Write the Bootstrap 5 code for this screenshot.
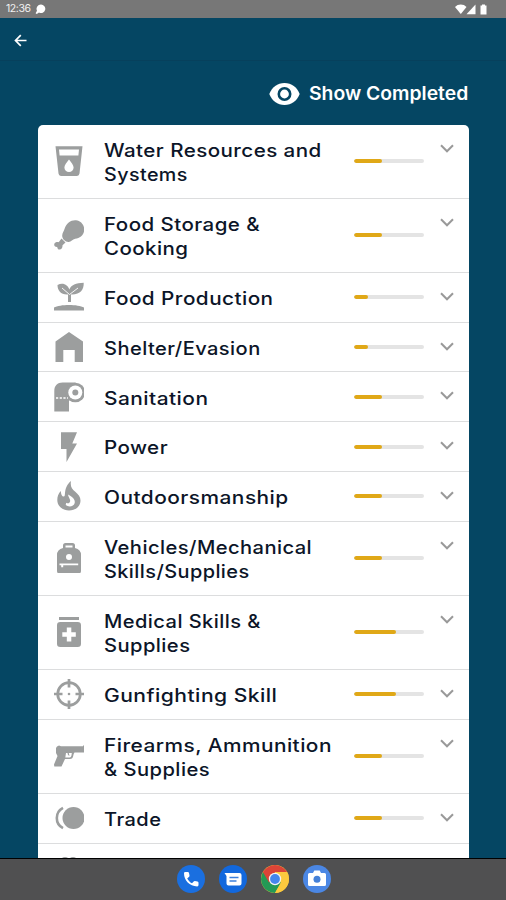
<!DOCTYPE html>
<html lang="en">
<head>
<meta charset="utf-8">
<meta name="viewport" content="width=device-width, initial-scale=1">
<title>Preparedness checklist</title>
<link href="https://cdn.jsdelivr.net/npm/bootstrap@5.3.0/dist/css/bootstrap.min.css" rel="stylesheet">
<style>
body { background: #054663; font-family: Inter, "Open Sans", sans-serif; height: 900px; overflow: hidden; }
.statusbar { height: 18px; background: #777; color: #f1f1f1; font-size: 10.5px; line-height: 18px; padding: 0 18px 0 6px; letter-spacing: -.4px; }
.topbar { height: 43px; padding: 2px 0 0 14px; border-bottom: 1px solid #07405c; }
.toggle-row { height: 63.5px; padding: 3px 38px 0 0; }
.toggle-label { font-size: 18.5px; font-weight: 600; width: 159px; margin-left: 9px; white-space: nowrap; }
.scroll-area { height: 733.5px; padding: 0 37px 0 38px; }
.checklist { background: #fff; border-radius: 5px 5px 0 0; height: 760px; }
.item { height: 49.7px; border-bottom: 1.5px solid #dcddde; padding-left: 15.5px; padding-right: 15px; }
.item.tall { height: 74.3px; }
.item svg.glyph { width: 30px; height: 30px; fill: #9c9e9e; flex: none; }
.title { width: 270.5px; padding: 2px 0 0 20.5px; flex: none; font-size: 18.3px; line-height: 24.4px; font-weight: 450; color: #0c1528; white-space: nowrap; }
.title span, .toggle-label span { display: block; width: max-content; transform-origin: 0 50%; }
.title span { letter-spacing: .4px; }
.item .progress { width: 70px; height: 4px; background: #e4e4e4; border-radius: 2px; flex: none; }
.item .progress-bar { background: #e0a817; border-radius: 2px; }
.chev { width: 14px; height: 9px; margin: 19px 0 0 15.5px; fill: none; stroke: #999; stroke-width: 2; align-self: flex-start; }
.dock { height: 42px; background: #505051; border-top: 1px solid #000; gap: 14px; padding: 0 0 1px 1px; }
.dock svg { width: 28px; height: 28px; }
</style>
</head>
<body class="d-flex flex-column m-0">
<header class="statusbar d-flex align-items-center flex-shrink-0">
  <span>12:36</span>
  <svg class="ms-1" width="11" height="11" viewBox="0 0 11 11"><path d="M6 .5a4.300 4.300 0 1 1-2 8.100L1.800 10 .6 9.200 2 6.700A4.300 4.300 0 0 1 6 .5z" fill="#fff"/></svg>
  <svg class="ms-auto" width="33" height="11" viewBox="0 0 33 11" fill="#fff"><path d="M0 3C3-.3 8.500-.3 11.500 3L5.800 10z"/><path d="M20.500.5v9.800H11.500z"/><path d="M25.500 1.500H27V.5h3v1h1.500v9h-6z"/></svg>
</header>
<nav class="topbar d-flex align-items-center flex-shrink-0">
  <svg width="13" height="13" viewBox="0 0 13 13" fill="none" stroke="#fff" stroke-width="1.700"><path d="M12.500 6.500H2M6.800 1.200L1.500 6.500l5.300 5.300"/></svg>
</nav>
<div class="toggle-row d-flex align-items-center justify-content-end text-white flex-shrink-0">
  <svg width="31" height="22" viewBox="0 0 31 22"><path d="M15.500 0C8.500 0 2.800 4.400.3 11c2.500 6.600 8.200 11 15.200 11s12.700-4.400 15.200-11C28.200 4.400 22.500 0 15.500 0z" fill="#fff"/><circle cx="15.500" cy="11" r="5.700" fill="none" stroke="#054663" stroke-width="2.600"/></svg>
  <div class="toggle-label"><span data-w="159">Show Completed</span></div>
</div>

<main class="scroll-area overflow-hidden flex-shrink-0">
<div class="checklist">
  <div class="item tall d-flex align-items-center">
    <svg class="glyph" viewBox="0 0 30 30"><path fill-rule="evenodd" d="M1.500.3h27l-3 27.200q-.3 2.400-2.500 2.400H7q-2.200 0-2.500-2.400zM5 3.500l.6 6h18.800l.6-6zM15 13.500c-2.400 3-4.600 5.600-4.600 8a4.600 4.600 0 0 0 9.200 0c0-2.400-2.200-5-4.600-8z"/></svg>
    <div class="title"><span data-w="218">Water Resources and</span><span data-w="84">Systems</span></div>
    <div class="progress"><div class="progress-bar" style="width:40%"></div></div>
    <svg class="chev" viewBox="0 0 14 9"><path d="M1 1.300l6 6 6-6"/></svg>
  </div>
  <div class="item tall d-flex align-items-center">
    <svg class="glyph" viewBox="0 0 30 30"><path d="M10.500 9C12.500 3 17-.3 22 .2c5 .6 8.500 4.800 8.200 10-.4 4.800-4 7.800-9 8.600-2.700.6-4 3-6.500 3.200C11.500 22.300 8 19 8.200 15.500c.1-2.500 1.500-4 2.300-6.500z"/><path d="M7.500 18.500l4 4-3 2.700c.2 2-1 4.300-3 4.300-1.700 0-2-1.300-2.300-2.600C1.500 27-.2 26 .3 24c.6-1.700 2.600-2.200 4.400-1.800z"/></svg>
    <div class="title"><span data-w="156">Food Storage &amp;</span><span data-w="84">Cooking</span></div>
    <div class="progress"><div class="progress-bar" style="width:40%"></div></div>
    <svg class="chev" viewBox="0 0 14 9"><path d="M1 1.300l6 6 6-6"/></svg>
  </div>
  <div class="item d-flex align-items-center">
    <svg class="glyph" viewBox="0 0 30 30"><path d="M0 28.500v-3c6-3.500 24-3.500 30 0v3zM14 20v-7.500C7 13 3.500 8.500 3.500 3 9 0 14 3 15.300 7.500 17 3 22 1 29.700.8 30 8 26 13 17 12.500V20z"/><path d="M8 6l7.500 6.500L24 6" fill="none" stroke="#fff" stroke-width=".9"/></svg>
    <div class="title"><span data-w="170">Food Production</span></div>
    <div class="progress"><div class="progress-bar" style="width:20%"></div></div>
    <svg class="chev" viewBox="0 0 14 9"><path d="M1 1.300l6 6 6-6"/></svg>
  </div>
  <div class="item d-flex align-items-center">
    <svg class="glyph" viewBox="0 0 30 30"><path d="M15 0l14 9.500V30h-8.300V18H9.300v12H1.500V9.500z"/></svg>
    <div class="title"><span data-w="157">Shelter/Evasion</span></div>
    <div class="progress"><div class="progress-bar" style="width:20%"></div></div>
    <svg class="chev" viewBox="0 0 14 9"><path d="M1 1.300l6 6 6-6"/></svg>
  </div>
  <div class="item d-flex align-items-center">
    <svg class="glyph" viewBox="0 0 30 30"><path d="M.3 29.500V9C.3 3.500 3.500.5 8.500.5h13v18H15v11z"/><circle cx="21.300" cy="10.500" r="9.800"/><circle cx="21.300" cy="10.500" r="7" fill="#fff"/><circle cx="21.300" cy="10.500" r="3"/><path d="M2 16h12" stroke="#fff" stroke-width="1.600" stroke-dasharray="2.200 1.500"/></svg>
    <div class="title"><span data-w="104">Sanitation</span></div>
    <div class="progress"><div class="progress-bar" style="width:40%"></div></div>
    <svg class="chev" viewBox="0 0 14 9"><path d="M1 1.300l6 6 6-6"/></svg>
  </div>
  <div class="item d-flex align-items-center">
    <svg class="glyph" viewBox="0 0 30 30"><path d="M7 .3h16l-4.700 11.200H23L12.500 30V17H7z"/></svg>
    <div class="title"><span data-w="64">Power</span></div>
    <div class="progress"><div class="progress-bar" style="width:40%"></div></div>
    <svg class="chev" viewBox="0 0 14 9"><path d="M1 1.300l6 6 6-6"/></svg>
  </div>
  <div class="item d-flex align-items-center">
    <svg class="glyph" viewBox="0 0 30 30"><path d="M17 0c-1 6 1 8 4 10.500 3.500 3 5.500 5.500 5.500 9 0 6-5 10-11.500 10S3.300 25 3.300 19c0-3.500 1-6.500 3.500-9 .2 3.500 1 5.500 3 5.500C12.500 15.500 8.500 7 17 0z"/><path d="M14 13.500c5 2.500 7.500 5.500 6.700 8.500-.8 3.500-6 4.500-9 2l.5-2.200c2 1.300 4 .2 4-2 0-2-1.700-3.300-2.200-6.300z" fill="#fff"/></svg>
    <div class="title"><span data-w="185">Outdoorsmanship</span></div>
    <div class="progress"><div class="progress-bar" style="width:40%"></div></div>
    <svg class="chev" viewBox="0 0 14 9"><path d="M1 1.300l6 6 6-6"/></svg>
  </div>
  <div class="item tall d-flex align-items-center">
    <svg class="glyph" viewBox="0 0 30 30"><path fill-rule="evenodd" d="M9 5V2.500Q9 0 11.500 0h7Q21 0 21 2.500V5q6 1.500 6 7v16q0 2.500-2.500 2.500h-19Q3 30.500 3 28V12q0-5.500 6-7zm2.500-.5h7v-2h-7zM15 11a3 3 0 1 0 0 6 3 3 0 0 0 0-6zM5.500 20.500v1.800h1.700v2h2v-2h15v-1.800z"/></svg>
    <div class="title"><span data-w="208">Vehicles/Mechanical</span><span data-w="146">Skills/Supplies</span></div>
    <div class="progress"><div class="progress-bar" style="width:40%"></div></div>
    <svg class="chev" viewBox="0 0 14 9"><path d="M1 1.300l6 6 6-6"/></svg>
  </div>
  <div class="item tall d-flex align-items-center">
    <svg class="glyph" viewBox="0 0 30 30"><path d="M5 0h20v3H5z"/><path fill-rule="evenodd" d="M6.300 5h17.400Q27 5 27 8.300v18.400q0 3.300-3.300 3.300H6.300Q3 30 3 26.700V8.300Q3 5 6.300 5zm6.500 5.500v4.700H8.300v4.500h4.500v4.800h4.500v-4.800h4.500v-4.500h-4.500v-4.700z"/></svg>
    <div class="title"><span data-w="157">Medical Skills &amp;</span><span data-w="86">Supplies</span></div>
    <div class="progress"><div class="progress-bar" style="width:60%"></div></div>
    <svg class="chev" viewBox="0 0 14 9"><path d="M1 1.300l6 6 6-6"/></svg>
  </div>
  <div class="item d-flex align-items-center">
    <svg class="glyph" viewBox="0 0 30 30"><g fill="none" stroke="#9c9e9e" stroke-width="2.700"><circle cx="15" cy="15" r="11.300"/><path d="M15 0v8.500M15 21.500V30M0 15h8.500M21.500 15H30"/></g><circle cx="15" cy="15" r="1.300"/></svg>
    <div class="title"><span data-w="173">Gunfighting Skill</span></div>
    <div class="progress"><div class="progress-bar" style="width:60%"></div></div>
    <svg class="chev" viewBox="0 0 14 9"><path d="M1 1.300l6 6 6-6"/></svg>
  </div>
  <div class="item tall d-flex align-items-center">
    <svg class="glyph" viewBox="0 0 30 30"><path fill-rule="evenodd" d="M3 5.500l2-1 2 .7h22V4.500h1.300v7h-9.800q-1 1-1.300 3.500-.5 3-3.200 3H11L7.500 25.500H.3l-.3-2L3.500 15 2 12V7zM12 12l-.7 4.500h4.200c1.500 0 2-1 2.300-4.500h-3l.7 3-1.500-1-.5-2z"/></svg>
    <div class="title"><span data-w="228">Firearms, Ammunition</span><span data-w="106">&amp; Supplies</span></div>
    <div class="progress"><div class="progress-bar" style="width:40%"></div></div>
    <svg class="chev" viewBox="0 0 14 9"><path d="M1 1.300l6 6 6-6"/></svg>
  </div>
  <div class="item d-flex align-items-center">
    <svg class="glyph" viewBox="0 0 30 30"><circle cx="19.500" cy="15" r="11"/><path d="M9 4.800a11.500 11.500 0 0 0 0 20.400" fill="none" stroke="#9c9e9e" stroke-width="2.600"/></svg>
    <div class="title"><span data-w="57">Trade</span></div>
    <div class="progress"><div class="progress-bar" style="width:40%"></div></div>
    <svg class="chev" viewBox="0 0 14 9"><path d="M1 1.300l6 6 6-6"/></svg>
  </div>
  <div class="item tall d-flex align-items-start pt-2">
    <svg class="glyph mt-1" viewBox="0 0 30 30"><circle cx="11" cy="5" r="4"/><circle cx="19" cy="5" r="4"/></svg>
  </div>
</div>
</main>

<footer class="dock d-flex align-items-center justify-content-center flex-shrink-0">
  <svg viewBox="0 0 28 28"><circle cx="14" cy="14" r="14" fill="#1a6fe0"/><path d="M7 8.300Q7 7 8.300 7h2.500q1 0 1.200 1l.5 2.600q.1.700-.4 1.200l-1.900 1.700c1.300 2.400 2.600 3.600 4.800 4.800l1.700-1.900q.5-.5 1.200-.4l2.600.5q1 .2 1 1.200v2.400q0 1.300-1.300 1.300C12.500 21.400 7 15.500 7 8.300z" fill="#fff"/></svg>
  <svg viewBox="0 0 28 28"><circle cx="14" cy="14" r="14" fill="#1268dd"/><path d="M5.500 8h15q2 0 2 2v8.500q0 2-2 2h-11q-2 0-2-2V11z" fill="#fff"/><path d="M10.500 12.500h9M10.500 16h7" stroke="#3d80dc" stroke-width="1.400"/></svg>
  <svg viewBox="0 0 28 28"><circle cx="14" cy="14" r="14" fill="#fcca3e"/><path d="M14 14L1.900 7A14 14 0 0 0 14 28l6-10.500z" fill="#249a55"/><path d="M1.900 7A14 14 0 0 1 26.100 7H14v7L8 17.500z" fill="#db4437"/><path d="M26.100 7H14v7l6 3.500L14 28A14 14 0 0 0 26.100 7z" fill="#fcca3e"/><circle cx="14" cy="14" r="6.200" fill="#f4f4f4"/><circle cx="14" cy="14" r="4.900" fill="#4486ec"/></svg>
  <svg viewBox="0 0 28 28"><circle cx="14" cy="14" r="14" fill="#4b87e4"/><path d="M6.500 8H10l1.300-2.500h5.400L18 8h3.500Q23 8 23 9.500v10q0 1.500-1.500 1.500h-15Q5 21 5 19.500v-10Q5 8 6.500 8z" fill="#fff"/><circle cx="14" cy="14.300" r="3.500" fill="#4480d8"/></svg>
</footer>
<script src="https://cdn.jsdelivr.net/npm/bootstrap@5.3.0/dist/js/bootstrap.bundle.min.js"></script>
<script>
// Widen each label line to its set measure
document.querySelectorAll('[data-w]').forEach(function (el) {
  el.style.transform = 'scaleX(' + (el.dataset.w / el.offsetWidth) + ')';
});
</script>
</body>
</html>
